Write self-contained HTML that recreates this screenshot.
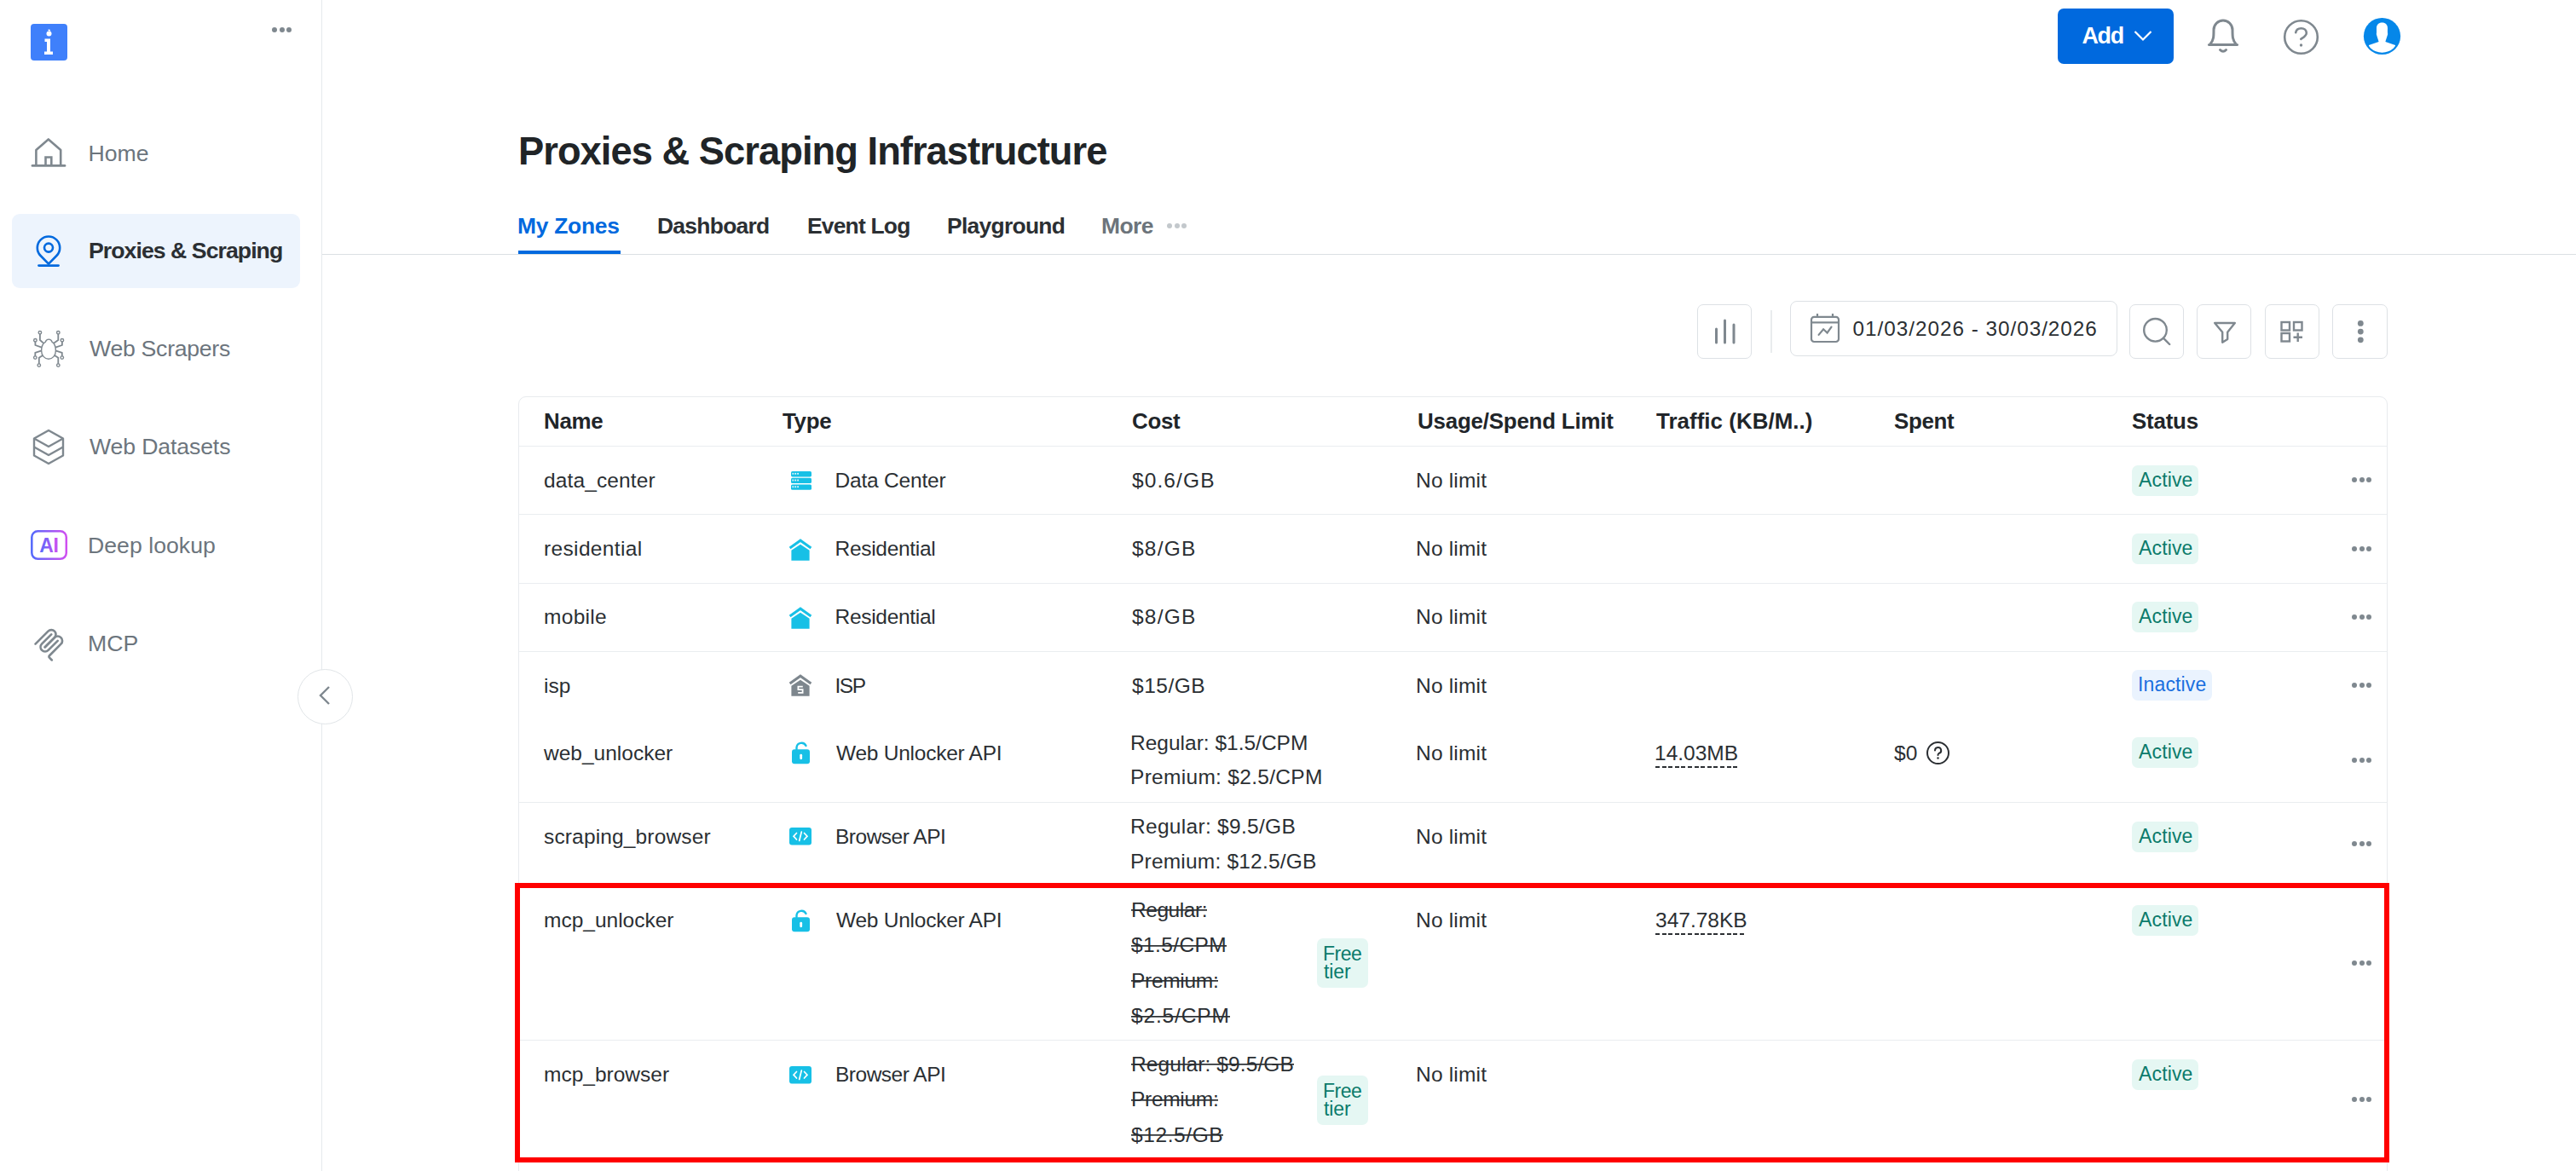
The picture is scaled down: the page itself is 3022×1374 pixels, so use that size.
<!DOCTYPE html>
<html><head><meta charset="utf-8"><style>
html,body{margin:0;padding:0;background:#fff;}
body{width:3022px;height:1374px;position:relative;overflow:hidden;font-family:"Liberation Sans",sans-serif;}
.t{position:absolute;line-height:1;white-space:nowrap;font-family:"Liberation Sans",sans-serif;}
svg{overflow:visible}
</style></head><body>
<div style="position:absolute;left:377px;top:0px;width:1px;height:1374px;background:#e6e9ec"></div>
<div style="position:absolute;left:36px;top:28px;width:43px;height:43px;background:#3f80fb;border-radius:4px"></div>
<svg style="position:absolute;left:36px;top:28px" width="43" height="43" viewBox="0 0 43 43" fill="none"><circle cx="21.5" cy="11.5" r="3" fill="#fff"/><path d="M20.5 7.5 q1.5 -1 2 1" stroke="#fff" stroke-width="1.5"/><path d="M16.5 17.5 h6.5 v15 h3 v3.5 h-10 v-3.5 h3 v-11.5 h-2.5z" fill="#fff"/></svg>
<div style="position:absolute;left:319px;top:32px;width:6px;height:6px;background:#7f888f;border-radius:50%"></div>
<div style="position:absolute;left:327.5px;top:32px;width:6px;height:6px;background:#7f888f;border-radius:50%"></div>
<div style="position:absolute;left:336px;top:32px;width:6px;height:6px;background:#7f888f;border-radius:50%"></div>
<div style="position:absolute;left:14px;top:251px;width:338px;height:87px;background:#edf4fd;border-radius:9px"></div>
<div class="t" style="left:103.5px;top:166.5px;font-size:26.7px;font-weight:400;color:#6c757d;letter-spacing:0px;">Home</div>
<div class="t" style="left:104.0px;top:281.2px;font-size:26.7px;font-weight:700;color:#2b2f33;letter-spacing:-0.97px;">Proxies &amp; Scraping</div>
<div class="t" style="left:105.0px;top:396.3px;font-size:26.7px;font-weight:400;color:#6c757d;letter-spacing:-0.3px;">Web Scrapers</div>
<div class="t" style="left:105.0px;top:511.0px;font-size:26.7px;font-weight:400;color:#6c757d;letter-spacing:-0.15px;">Web Datasets</div>
<div class="t" style="left:103.0px;top:626.5px;font-size:26.7px;font-weight:400;color:#6c757d;letter-spacing:0px;">Deep lookup</div>
<div class="t" style="left:103.0px;top:742.3px;font-size:26.7px;font-weight:400;color:#6c757d;letter-spacing:0px;">MCP</div>
<svg style="position:absolute;left:36px;top:160px" width="42" height="38" viewBox="0 0 42 38" fill="none"><path d="M6.4 34 V16 L20.8 3.4 L35.2 16 V34" stroke="#7f888f" stroke-width="2.6" stroke-linejoin="round"/><path d="M2 34.4 H40" stroke="#7f888f" stroke-width="2.8" stroke-linecap="round"/><path d="M17.5 34 V24.5 H24.3 V34" stroke="#7f888f" stroke-width="2.6"/></svg>
<svg style="position:absolute;left:38px;top:274px" width="38" height="42" viewBox="0 0 38 42" fill="none"><path d="M19 35.6 L9.6 26 A13.2 13.2 0 1 1 28.4 26 Z" stroke="#0069de" stroke-width="2.6" stroke-linejoin="round"/><circle cx="19" cy="16.6" r="5" stroke="#0069de" stroke-width="2.6"/><path d="M7.5 37.6 H30.5" stroke="#0069de" stroke-width="2.8" stroke-linecap="round"/></svg>
<svg style="position:absolute;left:34px;top:382px" width="46" height="54" viewBox="0 0 46 54" fill="none"><path d="M19.4 19.2 A3.9 4 0 0 1 27 19.2 C29.8 21 31.4 25 31.4 29.5 C31.4 35 27.8 39.2 23 39.2 C18.2 39.2 14.6 35 14.6 29.5 C14.6 25 16.2 21 19.4 19.2 Z" stroke="#7f888f" stroke-width="1.4"/><path d="M17 20.7 L12.9 17 L12.9 8.3" stroke="#7f888f" stroke-width="1.8" stroke-linejoin="round"/><circle cx="12.9" cy="8.3" r="1.75" fill="#fff" stroke="#7f888f" stroke-width="1.4"/><path d="M29 20.7 L34.3 17 L34.3 8.3" stroke="#7f888f" stroke-width="1.8" stroke-linejoin="round"/><circle cx="34.3" cy="8.3" r="1.75" fill="#fff" stroke="#7f888f" stroke-width="1.4"/><path d="M14.9 25.6 L7.4 23 L7.4 17.3" stroke="#7f888f" stroke-width="1.8" stroke-linejoin="round"/><circle cx="7.4" cy="17.3" r="1.75" fill="#fff" stroke="#7f888f" stroke-width="1.4"/><path d="M31.1 25.6 L38.9 23 L38.9 17.3" stroke="#7f888f" stroke-width="1.8" stroke-linejoin="round"/><circle cx="38.9" cy="17.3" r="1.75" fill="#fff" stroke="#7f888f" stroke-width="1.4"/><path d="M14.9 29.3 L7.3 31.8 L7.3 37.6" stroke="#7f888f" stroke-width="1.8" stroke-linejoin="round"/><circle cx="7.3" cy="37.6" r="1.75" fill="#fff" stroke="#7f888f" stroke-width="1.4"/><path d="M31.1 29.3 L38.8 31.8 L38.8 37.6" stroke="#7f888f" stroke-width="1.8" stroke-linejoin="round"/><circle cx="38.8" cy="37.6" r="1.75" fill="#fff" stroke="#7f888f" stroke-width="1.4"/><path d="M16.1 35 L11.8 37.8 L11.8 46.6" stroke="#7f888f" stroke-width="1.8" stroke-linejoin="round"/><circle cx="11.8" cy="46.6" r="1.75" fill="#fff" stroke="#7f888f" stroke-width="1.4"/><path d="M30 35 L34.3 37.8 L34.3 46.6" stroke="#7f888f" stroke-width="1.8" stroke-linejoin="round"/><circle cx="34.3" cy="46.6" r="1.75" fill="#fff" stroke="#7f888f" stroke-width="1.4"/></svg>
<svg style="position:absolute;left:38px;top:503px" width="38" height="43" viewBox="0 0 38 43" fill="none"><path d="M19 2 L36 11.5 V31.5 L19 41 L2 31.5 V11.5 Z" stroke="#7f888f" stroke-width="2.4" stroke-linejoin="round"/><path d="M2 11.5 L19 21 L36 11.5" stroke="#7f888f" stroke-width="2.4" stroke-linejoin="round"/><path d="M2 21.5 L19 31 L36 21.5" stroke="#7f888f" stroke-width="2.4" stroke-linejoin="round"/></svg>
<svg style="position:absolute;left:35px;top:621px" width="45" height="37" viewBox="0 0 45 37" fill="none"><defs><linearGradient id="aig" x1="0" y1="0" x2="1" y2="0"><stop offset="0" stop-color="#5469fb"/><stop offset="1" stop-color="#cf4ff0"/></linearGradient></defs><rect x="2.3" y="2.3" width="40.5" height="32.5" rx="7" stroke="url(#aig)" stroke-width="2.5"/><text x="22.3" y="26.8" text-anchor="middle" font-family="Liberation Sans" font-weight="700" font-size="23" letter-spacing="-0.5" fill="url(#aig)">AI</text></svg>
<svg style="position:absolute;left:35.8px;top:734px" width="43" height="43" viewBox="0 0 195 195" fill="none"><g stroke="#7f888f" stroke-width="12" stroke-linecap="round" fill="none"><path d="M25 97.8528L92.8823 29.9706C102.255 20.598 117.451 20.598 126.823 29.9706C136.196 39.3431 136.196 54.5391 126.823 63.9117L75.5581 115.177"/><path d="M76.2653 114.47L126.823 63.9117C136.196 54.5391 151.392 54.5391 160.765 63.9117L161.118 64.2652C170.491 73.6378 170.491 88.8338 161.118 98.2063L99.7248 159.6C96.6006 162.724 96.6006 167.789 99.7248 170.913L112.331 183.52"/><path d="M109.853 46.9411L59.6482 97.1457C50.2757 106.518 50.2757 121.714 59.6482 131.087C69.0208 140.459 84.2168 140.459 93.5894 131.087L143.794 80.8822"/></g></svg>
<div style="position:absolute;left:349px;top:784.5px;width:65px;height:65px;background:#fff;border:1.2px solid #e1e5e8;border-radius:50%;box-sizing:border-box"></div>
<svg style="position:absolute;left:370px;top:802px" width="22" height="28" viewBox="0 0 22 28" fill="none"><path d="M16 4 L6 14 L16 24" stroke="#7f888f" stroke-width="2.4" fill="none"/></svg>
<div style="position:absolute;left:2414px;top:10px;width:136px;height:65px;background:#0069de;border-radius:7px"></div>
<div class="t" style="left:2442.5px;top:28.8px;font-size:26.9px;font-weight:700;color:#fff;letter-spacing:-1.3px;">Add</div>
<svg style="position:absolute;left:2500px;top:32px" width="28" height="20" viewBox="0 0 28 20" fill="none"><path d="M4.5 5 L14 14.5 L23.5 5" stroke="#fff" stroke-width="2.2" fill="none"/></svg>
<svg style="position:absolute;left:2586px;top:18px" width="44" height="48" viewBox="0 0 44 48" fill="none"><path d="M7 33.5 C11 29 11 25 11 17 A11 11 0 0 1 33 17 C33 25 33 29 37 33.5" stroke="#7f888f" stroke-width="3" fill="none" stroke-linejoin="round"/><path d="M5.5 34.5 H38.5" stroke="#7f888f" stroke-width="3" stroke-linecap="round"/><path d="M18.5 40.5 Q22 44 25.5 40.5" stroke="#7f888f" stroke-width="3" stroke-linecap="round" fill="none"/></svg>
<svg style="position:absolute;left:2677px;top:21px" width="46" height="46" viewBox="0 0 46 46" fill="none"><circle cx="22.5" cy="22.5" r="19.3" stroke="#7f888f" stroke-width="2.6"/><path d="M16.2 17.3 C16.7 13.8 19.3 12.2 22.6 12.2 C26.3 12.2 28.8 14.6 28.8 17.8 C28.8 21.2 25.3 22.8 22.3 24.8" stroke="#7f888f" stroke-width="2.6" stroke-linecap="round" fill="none"/><circle cx="22.5" cy="32" r="1.7" fill="#7f888f"/></svg>
<svg style="position:absolute;left:2772px;top:20px" width="46" height="46" viewBox="0 0 46 46" fill="none"><circle cx="22.5" cy="22.5" r="21.6" fill="#0587e9"/><clipPath id="avc"><circle cx="22.5" cy="22.5" r="19.3"/></clipPath><g clip-path="url(#avc)" fill="#fff"><path d="M22.5 6.5 C18.5 6.5 16 9 16 13 C16 15.5 16.2 18 15.8 20 C16.5 22.5 17.6 25.5 18.6 29 L7 33 L7 48 L38 48 L38 33 L26.4 29 C27.4 25.5 28.5 22.5 29.2 20 C28.8 18 29 15.5 29 13 C29 9 26.5 6.5 22.5 6.5Z"/></g></svg>
<div class="t" style="left:608.0px;top:155.2px;font-size:45.3px;font-weight:700;color:#202427;letter-spacing:-0.97px;">Proxies &amp; Scraping Infrastructure</div>
<div class="t" style="left:607.0px;top:252.3px;font-size:26.4px;font-weight:700;color:#0069de;letter-spacing:-0.25px;">My Zones</div>
<div class="t" style="left:771.0px;top:252.3px;font-size:26.4px;font-weight:700;color:#2b2f33;letter-spacing:-0.7px;">Dashboard</div>
<div class="t" style="left:947.0px;top:252.3px;font-size:26.4px;font-weight:700;color:#2b2f33;letter-spacing:-0.78px;">Event Log</div>
<div class="t" style="left:1111.0px;top:252.3px;font-size:26.4px;font-weight:700;color:#2b2f33;letter-spacing:-0.7px;">Playground</div>
<div class="t" style="left:1292.0px;top:252.3px;font-size:26.4px;font-weight:700;color:#6c747b;letter-spacing:-0.5px;">More</div>
<div style="position:absolute;left:1369px;top:262px;width:6px;height:6px;background:#c3c8cc;border-radius:50%"></div>
<div style="position:absolute;left:1377.5px;top:262px;width:6px;height:6px;background:#c3c8cc;border-radius:50%"></div>
<div style="position:absolute;left:1386px;top:262px;width:6px;height:6px;background:#c3c8cc;border-radius:50%"></div>
<div style="position:absolute;left:378px;top:298px;width:2644px;height:1px;background:#dbe0e4"></div>
<div style="position:absolute;left:608px;top:294px;width:120px;height:4px;background:#0069de"></div>
<div style="position:absolute;left:1991px;top:357px;width:64px;height:64px;background:#fff;border:1.5px solid #dde1e5;border-radius:7px;box-sizing:border-box"></div>
<svg style="position:absolute;left:1991px;top:357px" width="64" height="64" viewBox="0 0 64 64" fill="none"><path d="M22.5 29 V45 M32.5 19 V45 M43 24 V45" stroke="#7f888f" stroke-width="3" stroke-linecap="round"/></svg>
<div style="position:absolute;left:2077px;top:364px;width:2px;height:50px;background:#e9ecee"></div>
<div style="position:absolute;left:2100px;top:353px;width:384px;height:65px;background:#fff;border:1.5px solid #dde1e5;border-radius:8px;box-sizing:border-box"></div>
<svg style="position:absolute;left:2122px;top:366px" width="38" height="38" viewBox="0 0 38 38" fill="none"><rect x="3" y="5.8" width="32" height="29.2" rx="3.2" stroke="#7f888f" stroke-width="2.2"/><path d="M3 12.4 H35" stroke="#7f888f" stroke-width="2.2"/><path d="M10 2.1 V6.5 M28 2.1 V6.5" stroke="#7f888f" stroke-width="2.2"/><path d="M11.6 26.9 L17.1 20.3 L21.6 24.5 L26.5 17.7" stroke="#7f888f" stroke-width="2.2" stroke-linecap="round" fill="none"/></svg>
<div class="t" style="left:2173.5px;top:373.5px;font-size:24.3px;font-weight:400;color:#2b2f33;letter-spacing:0.98px;">01/03/2026 - 30/03/2026</div>
<div style="position:absolute;left:2498px;top:357px;width:64px;height:64px;background:#fff;border:1.5px solid #dde1e5;border-radius:7px;box-sizing:border-box"></div>
<svg style="position:absolute;left:2498px;top:357px" width="64" height="64" viewBox="0 0 64 64" fill="none"><circle cx="30.5" cy="30.3" r="13.3" stroke="#7f888f" stroke-width="2.4"/><path d="M40.2 40 L47.2 47" stroke="#7f888f" stroke-width="2.4" stroke-linecap="round"/></svg>
<div style="position:absolute;left:2577px;top:357px;width:64px;height:64px;background:#fff;border:1.5px solid #dde1e5;border-radius:7px;box-sizing:border-box"></div>
<svg style="position:absolute;left:2577px;top:357px" width="64" height="64" viewBox="0 0 64 64" fill="none"><path d="M21.2 22 H44.8 L36.2 32.8 V40.9 L30.2 44.7 V32.8 Z" stroke="#7f888f" stroke-width="2.4" stroke-linejoin="round"/></svg>
<div style="position:absolute;left:2657px;top:357px;width:64px;height:64px;background:#fff;border:1.5px solid #dde1e5;border-radius:7px;box-sizing:border-box"></div>
<svg style="position:absolute;left:2657px;top:357px" width="64" height="64" viewBox="0 0 64 64" fill="none"><rect x="19.5" y="21" width="9.5" height="9.5" stroke="#7f888f" stroke-width="2.4"/><rect x="34" y="21" width="9.5" height="9.5" stroke="#7f888f" stroke-width="2.4"/><rect x="19.5" y="34" width="9.5" height="9.5" stroke="#7f888f" stroke-width="2.4"/><path d="M38.7 33.5 V44 M33.5 38.7 H44" stroke="#7f888f" stroke-width="2.4"/></svg>
<div style="position:absolute;left:2736px;top:357px;width:65px;height:64px;background:#fff;border:1.5px solid #dde1e5;border-radius:7px;box-sizing:border-box"></div>
<svg style="position:absolute;left:2736.5px;top:357px" width="64" height="64" viewBox="0 0 64 64" fill="none"><circle cx="32.3" cy="22.4" r="3.4" fill="#7f888f"/><circle cx="32.3" cy="32.1" r="3.4" fill="#7f888f"/><circle cx="32.3" cy="41.8" r="3.4" fill="#7f888f"/></svg>
<div style="position:absolute;left:608px;top:465px;width:2193px;height:1000px;border:1px solid #e8ebee;border-radius:9px;box-sizing:border-box"></div>
<div class="t" style="left:638.0px;top:481.7px;font-size:25.9px;font-weight:700;color:#212529;letter-spacing:-0.3px;">Name</div>
<div class="t" style="left:918.0px;top:481.7px;font-size:25.9px;font-weight:700;color:#212529;letter-spacing:-0.3px;">Type</div>
<div class="t" style="left:1328.0px;top:481.7px;font-size:25.9px;font-weight:700;color:#212529;letter-spacing:-0.3px;">Cost</div>
<div class="t" style="left:1663.0px;top:481.7px;font-size:25.9px;font-weight:700;color:#212529;letter-spacing:-0.2px;">Usage/Spend Limit</div>
<div class="t" style="left:1943.0px;top:481.7px;font-size:25.9px;font-weight:700;color:#212529;letter-spacing:0.05px;">Traffic (KB/M..)</div>
<div class="t" style="left:2222.0px;top:481.7px;font-size:25.9px;font-weight:700;color:#212529;letter-spacing:-0.3px;">Spent</div>
<div class="t" style="left:2501.0px;top:481.7px;font-size:25.9px;font-weight:700;color:#212529;letter-spacing:-0.2px;">Status</div>
<div style="position:absolute;left:609px;top:523px;width:2191px;height:1px;background:#eaedf0"></div>
<div style="position:absolute;left:609px;top:603px;width:2191px;height:1px;background:#eaedf0"></div>
<div style="position:absolute;left:609px;top:684px;width:2191px;height:1px;background:#eaedf0"></div>
<div style="position:absolute;left:609px;top:764px;width:2191px;height:1px;background:#eaedf0"></div>
<div style="position:absolute;left:609px;top:941px;width:2191px;height:1px;background:#eaedf0"></div>
<div style="position:absolute;left:609px;top:1038px;width:2191px;height:1px;background:#eaedf0"></div>
<div style="position:absolute;left:609px;top:1220px;width:2191px;height:1px;background:#eaedf0"></div>
<div class="t" style="left:638.0px;top:551.9px;font-size:24.5px;font-weight:400;color:#2b2f33;letter-spacing:0.12px;">data_center</div>
<svg style="position:absolute;left:928px;top:553px" width="24" height="22" viewBox="0 0 24 22" fill="none"><rect x="0" y="0.0" width="24" height="6.4" rx="1.6" fill="#17c0e6"/><rect x="1.4" y="1.9" width="1.8" height="1.8" fill="#fff" fill-opacity="0.85"/><rect x="4.3" y="1.9" width="1.8" height="1.8" fill="#fff" fill-opacity="0.85"/><rect x="7.2" y="1.9" width="1.8" height="1.8" fill="#fff" fill-opacity="0.85"/><rect x="0" y="7.7" width="24" height="6.4" rx="1.6" fill="#17c0e6"/><rect x="1.4" y="9.6" width="1.8" height="1.8" fill="#fff" fill-opacity="0.85"/><rect x="4.3" y="9.6" width="1.8" height="1.8" fill="#fff" fill-opacity="0.85"/><rect x="7.2" y="9.6" width="1.8" height="1.8" fill="#fff" fill-opacity="0.85"/><rect x="0" y="15.4" width="24" height="6.4" rx="1.6" fill="#17c0e6"/><rect x="1.4" y="17.3" width="1.8" height="1.8" fill="#fff" fill-opacity="0.85"/><rect x="4.3" y="17.3" width="1.8" height="1.8" fill="#fff" fill-opacity="0.85"/><rect x="7.2" y="17.3" width="1.8" height="1.8" fill="#fff" fill-opacity="0.85"/></svg>
<div class="t" style="left:979.5px;top:551.9px;font-size:24.5px;font-weight:400;color:#2b2f33;letter-spacing:-0.2px;">Data Center</div>
<div class="t" style="left:1328.0px;top:551.9px;font-size:24.5px;font-weight:400;color:#2b2f33;letter-spacing:1.1px;">$0.6/GB</div>
<div class="t" style="left:1661.0px;top:551.9px;font-size:24.5px;font-weight:400;color:#2b2f33;letter-spacing:0.2px;">No limit</div>
<div style="position:absolute;left:2501px;top:546px;width:78px;height:36px;background:#e5f7f3;border-radius:7px"></div>
<div class="t" style="left:2509.0px;top:552.1px;font-size:23.0px;font-weight:400;color:#0b7b6b;letter-spacing:0.15px;">Active</div>
<div style="position:absolute;left:2759px;top:560px;width:6px;height:6px;background:#7f888f;border-radius:50%"></div>
<div style="position:absolute;left:2767.5px;top:560px;width:6px;height:6px;background:#7f888f;border-radius:50%"></div>
<div style="position:absolute;left:2776px;top:560px;width:6px;height:6px;background:#7f888f;border-radius:50%"></div>
<div class="t" style="left:638.0px;top:631.9px;font-size:24.5px;font-weight:400;color:#2b2f33;letter-spacing:0.35px;">residential</div>
<svg style="position:absolute;left:926px;top:631.5px" width="26" height="26" viewBox="0 0 26 26" fill="none"><path d="M0.6 11 L13 2.2 L25.4 11" stroke="#17c0e6" stroke-width="3" fill="none" stroke-linejoin="miter"/><path d="M2.4 13.8 L13 6.8 L23.6 13.8 V25.8 H2.4 Z" fill="#17c0e6"/></svg>
<div class="t" style="left:979.5px;top:631.9px;font-size:24.5px;font-weight:400;color:#2b2f33;letter-spacing:-0.3px;">Residential</div>
<div class="t" style="left:1328.0px;top:631.9px;font-size:24.5px;font-weight:400;color:#2b2f33;letter-spacing:1.2px;">$8/GB</div>
<div class="t" style="left:1661.0px;top:631.9px;font-size:24.5px;font-weight:400;color:#2b2f33;letter-spacing:0.2px;">No limit</div>
<div style="position:absolute;left:2501px;top:626px;width:78px;height:36px;background:#e5f7f3;border-radius:7px"></div>
<div class="t" style="left:2509.0px;top:632.1px;font-size:23.0px;font-weight:400;color:#0b7b6b;letter-spacing:0.15px;">Active</div>
<div style="position:absolute;left:2759px;top:640.5px;width:6px;height:6px;background:#7f888f;border-radius:50%"></div>
<div style="position:absolute;left:2767.5px;top:640.5px;width:6px;height:6px;background:#7f888f;border-radius:50%"></div>
<div style="position:absolute;left:2776px;top:640.5px;width:6px;height:6px;background:#7f888f;border-radius:50%"></div>
<div class="t" style="left:638.0px;top:711.9px;font-size:24.5px;font-weight:400;color:#2b2f33;letter-spacing:0.3px;">mobile</div>
<svg style="position:absolute;left:926px;top:711.5px" width="26" height="26" viewBox="0 0 26 26" fill="none"><path d="M0.6 11 L13 2.2 L25.4 11" stroke="#17c0e6" stroke-width="3" fill="none" stroke-linejoin="miter"/><path d="M2.4 13.8 L13 6.8 L23.6 13.8 V25.8 H2.4 Z" fill="#17c0e6"/></svg>
<div class="t" style="left:979.5px;top:711.9px;font-size:24.5px;font-weight:400;color:#2b2f33;letter-spacing:-0.3px;">Residential</div>
<div class="t" style="left:1328.0px;top:711.9px;font-size:24.5px;font-weight:400;color:#2b2f33;letter-spacing:1.2px;">$8/GB</div>
<div class="t" style="left:1661.0px;top:711.9px;font-size:24.5px;font-weight:400;color:#2b2f33;letter-spacing:0.2px;">No limit</div>
<div style="position:absolute;left:2501px;top:706px;width:78px;height:36px;background:#e5f7f3;border-radius:7px"></div>
<div class="t" style="left:2509.0px;top:712.1px;font-size:23.0px;font-weight:400;color:#0b7b6b;letter-spacing:0.15px;">Active</div>
<div style="position:absolute;left:2759px;top:721px;width:6px;height:6px;background:#7f888f;border-radius:50%"></div>
<div style="position:absolute;left:2767.5px;top:721px;width:6px;height:6px;background:#7f888f;border-radius:50%"></div>
<div style="position:absolute;left:2776px;top:721px;width:6px;height:6px;background:#7f888f;border-radius:50%"></div>
<div class="t" style="left:638.0px;top:792.9px;font-size:24.5px;font-weight:400;color:#2b2f33;letter-spacing:0px;">isp</div>
<svg style="position:absolute;left:926px;top:791px" width="26" height="26" viewBox="0 0 26 26" fill="none"><path d="M0.6 11 L13 2.2 L25.4 11" stroke="#7d868d" stroke-width="3" fill="none" stroke-linejoin="miter"/><path d="M2.4 13.8 L13 6.8 L23.6 13.8 V25.8 H2.4 Z" fill="#7d868d"/><path d="M15.8 14.6 H10.4 V18.2 H15.6 V21.8 H10.2" stroke="#fff" stroke-width="1.8" fill="none"/></svg>
<div class="t" style="left:979.5px;top:792.9px;font-size:24.5px;font-weight:400;color:#2b2f33;letter-spacing:-1.5px;">ISP</div>
<div class="t" style="left:1328.0px;top:792.9px;font-size:24.5px;font-weight:400;color:#2b2f33;letter-spacing:0.5px;">$15/GB</div>
<div class="t" style="left:1661.0px;top:792.9px;font-size:24.5px;font-weight:400;color:#2b2f33;letter-spacing:0.2px;">No limit</div>
<div style="position:absolute;left:2501px;top:786px;width:94px;height:36px;background:#eaf3fe;border-radius:7px"></div>
<div class="t" style="left:2508.0px;top:792.1px;font-size:23.0px;font-weight:400;color:#1a6fdf;letter-spacing:0.15px;">Inactive</div>
<div style="position:absolute;left:2759px;top:801px;width:6px;height:6px;background:#7f888f;border-radius:50%"></div>
<div style="position:absolute;left:2767.5px;top:801px;width:6px;height:6px;background:#7f888f;border-radius:50%"></div>
<div style="position:absolute;left:2776px;top:801px;width:6px;height:6px;background:#7f888f;border-radius:50%"></div>
<div class="t" style="left:638.0px;top:871.9px;font-size:24.5px;font-weight:400;color:#2b2f33;letter-spacing:0px;">web_unlocker</div>
<svg style="position:absolute;left:926px;top:869px" width="27" height="27" viewBox="0 0 27 27" fill="none"><path d="M8.5 10 V8 A5.8 5.8 0 0 1 19.5 6" stroke="#17c0e6" stroke-width="2.4" fill="none" stroke-linecap="round"/><rect x="3" y="10.3" width="21" height="17" rx="3" fill="#17c0e6"/><rect x="12.3" y="15.8" width="2.8" height="6.4" rx="1.4" fill="#fff"/></svg>
<div class="t" style="left:981.0px;top:871.9px;font-size:24.5px;font-weight:400;color:#2b2f33;letter-spacing:-0.25px;">Web Unlocker API</div>
<div class="t" style="left:1326.0px;top:859.9px;font-size:24.5px;font-weight:400;color:#2b2f33;letter-spacing:0px;">Regular: $1.5/CPM</div>
<div class="t" style="left:1326.0px;top:900.4px;font-size:24.5px;font-weight:400;color:#2b2f33;letter-spacing:0.3px;">Premium: $2.5/CPM</div>
<div class="t" style="left:1661.0px;top:871.9px;font-size:24.5px;font-weight:400;color:#2b2f33;letter-spacing:0.2px;">No limit</div>
<div class="t" style="left:1941.0px;top:871.9px;font-size:24.5px;font-weight:400;color:#2b2f33;letter-spacing:0px;">14.03MB</div>
<div style="position:absolute;left:1942px;top:898.5px;width:98px;height:2.2px;background:repeating-linear-gradient(90deg,#2b2f33 0 5px,transparent 5px 7.6px)"></div>
<div class="t" style="left:2222.0px;top:871.9px;font-size:24.5px;font-weight:400;color:#2b2f33;letter-spacing:0px;">$0</div>
<svg style="position:absolute;left:2259px;top:869px" width="30" height="30" viewBox="0 0 30 30" fill="none"><circle cx="14.5" cy="14.5" r="12.5" stroke="#2b2f33" stroke-width="2"/><path d="M11 11.5 A3.6 3.6 0 1 1 15.5 15 C14.7 15.5 14.5 16 14.5 17" stroke="#2b2f33" stroke-width="2" fill="none" stroke-linecap="round"/><circle cx="14.5" cy="20.5" r="1.2" fill="#2b2f33"/></svg>
<div style="position:absolute;left:2501px;top:865px;width:78px;height:36px;background:#e5f7f3;border-radius:7px"></div>
<div class="t" style="left:2509.0px;top:871.1px;font-size:23.0px;font-weight:400;color:#0b7b6b;letter-spacing:0.15px;">Active</div>
<div style="position:absolute;left:2759px;top:889px;width:6px;height:6px;background:#7f888f;border-radius:50%"></div>
<div style="position:absolute;left:2767.5px;top:889px;width:6px;height:6px;background:#7f888f;border-radius:50%"></div>
<div style="position:absolute;left:2776px;top:889px;width:6px;height:6px;background:#7f888f;border-radius:50%"></div>
<div class="t" style="left:638.0px;top:969.9px;font-size:24.5px;font-weight:400;color:#2b2f33;letter-spacing:0.15px;">scraping_browser</div>
<svg style="position:absolute;left:925.7px;top:971px" width="26" height="21" viewBox="0 0 26 21" fill="none"><rect x="0" y="0" width="26" height="20.5" rx="3" fill="#17c0e6"/><path d="M8.5 6.5 L5 10.2 L8.5 14 M17.5 6.5 L21 10.2 L17.5 14 M14.3 5 L11.7 15.5" stroke="#fff" stroke-width="1.7" fill="none" stroke-linecap="round"/></svg>
<div class="t" style="left:980.0px;top:969.9px;font-size:24.5px;font-weight:400;color:#2b2f33;letter-spacing:-0.5px;">Browser API</div>
<div class="t" style="left:1326.0px;top:957.9px;font-size:24.5px;font-weight:400;color:#2b2f33;letter-spacing:0.3px;">Regular: $9.5/GB</div>
<div class="t" style="left:1326.0px;top:999.4px;font-size:24.5px;font-weight:400;color:#2b2f33;letter-spacing:0.2px;">Premium: $12.5/GB</div>
<div class="t" style="left:1661.0px;top:969.9px;font-size:24.5px;font-weight:400;color:#2b2f33;letter-spacing:0.2px;">No limit</div>
<div style="position:absolute;left:2501px;top:964px;width:78px;height:36px;background:#e5f7f3;border-radius:7px"></div>
<div class="t" style="left:2509.0px;top:970.1px;font-size:23.0px;font-weight:400;color:#0b7b6b;letter-spacing:0.15px;">Active</div>
<div style="position:absolute;left:2759px;top:987px;width:6px;height:6px;background:#7f888f;border-radius:50%"></div>
<div style="position:absolute;left:2767.5px;top:987px;width:6px;height:6px;background:#7f888f;border-radius:50%"></div>
<div style="position:absolute;left:2776px;top:987px;width:6px;height:6px;background:#7f888f;border-radius:50%"></div>
<div class="t" style="left:638.0px;top:1068.4px;font-size:24.5px;font-weight:400;color:#2b2f33;letter-spacing:0px;">mcp_unlocker</div>
<svg style="position:absolute;left:926px;top:1066px" width="27" height="27" viewBox="0 0 27 27" fill="none"><path d="M8.5 10 V8 A5.8 5.8 0 0 1 19.5 6" stroke="#17c0e6" stroke-width="2.4" fill="none" stroke-linecap="round"/><rect x="3" y="10.3" width="21" height="17" rx="3" fill="#17c0e6"/><rect x="12.3" y="15.8" width="2.8" height="6.4" rx="1.4" fill="#fff"/></svg>
<div class="t" style="left:981.0px;top:1068.4px;font-size:24.5px;font-weight:400;color:#2b2f33;letter-spacing:-0.25px;">Web Unlocker API</div>
<div class="t" style="left:1327.0px;top:1055.6px;font-size:24.5px;font-weight:400;color:#2b2f33;letter-spacing:-0.45px;background:linear-gradient(#2a2e32,#2a2e32) 0 11.6px / 100% 1.7px no-repeat">Regular:</div>
<div class="t" style="left:1327.0px;top:1097.1px;font-size:24.5px;font-weight:400;color:#2b2f33;letter-spacing:0.4px;background:linear-gradient(#2a2e32,#2a2e32) 0 11.6px / 100% 1.7px no-repeat">$1.5/CPM</div>
<div class="t" style="left:1327.0px;top:1138.6px;font-size:24.5px;font-weight:400;color:#2b2f33;letter-spacing:-0.3px;background:linear-gradient(#2a2e32,#2a2e32) 0 11.6px / 100% 1.7px no-repeat">Premium:</div>
<div class="t" style="left:1327.0px;top:1180.1px;font-size:24.5px;font-weight:400;color:#2b2f33;letter-spacing:0.85px;background:linear-gradient(#2a2e32,#2a2e32) 0 11.6px / 100% 1.7px no-repeat">$2.5/CPM</div>
<div style="position:absolute;left:1545px;top:1101px;width:60px;height:58px;background:#e5f7f3;border-radius:7px"></div>
<div class="t" style="left:1552.0px;top:1108.4px;font-size:23.0px;font-weight:400;color:#0b7b6b;letter-spacing:-0.5px;">Free</div>
<div class="t" style="left:1553.0px;top:1129.1px;font-size:23.0px;font-weight:400;color:#0b7b6b;letter-spacing:-0.1px;">tier</div>
<div class="t" style="left:1661.0px;top:1068.2px;font-size:24.5px;font-weight:400;color:#2b2f33;letter-spacing:0.2px;">No limit</div>
<div class="t" style="left:1942.0px;top:1068.2px;font-size:24.5px;font-weight:400;color:#2b2f33;letter-spacing:0px;">347.78KB</div>
<div style="position:absolute;left:1942px;top:1095px;width:106px;height:2.2px;background:repeating-linear-gradient(90deg,#2b2f33 0 5px,transparent 5px 7.6px)"></div>
<div style="position:absolute;left:2501px;top:1062px;width:78px;height:36px;background:#e5f7f3;border-radius:7px"></div>
<div class="t" style="left:2509.0px;top:1068.1px;font-size:23.0px;font-weight:400;color:#0b7b6b;letter-spacing:0.15px;">Active</div>
<div style="position:absolute;left:2759px;top:1127px;width:6px;height:6px;background:#7f888f;border-radius:50%"></div>
<div style="position:absolute;left:2767.5px;top:1127px;width:6px;height:6px;background:#7f888f;border-radius:50%"></div>
<div style="position:absolute;left:2776px;top:1127px;width:6px;height:6px;background:#7f888f;border-radius:50%"></div>
<div class="t" style="left:638.0px;top:1248.6px;font-size:24.5px;font-weight:400;color:#2b2f33;letter-spacing:0px;">mcp_browser</div>
<svg style="position:absolute;left:925.7px;top:1250.5px" width="26" height="21" viewBox="0 0 26 21" fill="none"><rect x="0" y="0" width="26" height="20.5" rx="3" fill="#17c0e6"/><path d="M8.5 6.5 L5 10.2 L8.5 14 M17.5 6.5 L21 10.2 L17.5 14 M14.3 5 L11.7 15.5" stroke="#fff" stroke-width="1.7" fill="none" stroke-linecap="round"/></svg>
<div class="t" style="left:980.0px;top:1248.6px;font-size:24.5px;font-weight:400;color:#2b2f33;letter-spacing:-0.5px;">Browser API</div>
<div class="t" style="left:1327.0px;top:1236.7px;font-size:24.5px;font-weight:400;color:#2b2f33;letter-spacing:0.1px;background:linear-gradient(#2a2e32,#2a2e32) 0 11.6px / 100% 1.7px no-repeat">Regular: $9.5/GB</div>
<div class="t" style="left:1327.0px;top:1278.1px;font-size:24.5px;font-weight:400;color:#2b2f33;letter-spacing:-0.3px;background:linear-gradient(#2a2e32,#2a2e32) 0 11.6px / 100% 1.7px no-repeat">Premium:</div>
<div class="t" style="left:1327.0px;top:1319.5px;font-size:24.5px;font-weight:400;color:#2b2f33;letter-spacing:0.6px;background:linear-gradient(#2a2e32,#2a2e32) 0 11.6px / 100% 1.7px no-repeat">$12.5/GB</div>
<div style="position:absolute;left:1545px;top:1262px;width:60px;height:58px;background:#e5f7f3;border-radius:7px"></div>
<div class="t" style="left:1552.0px;top:1269.4px;font-size:23.0px;font-weight:400;color:#0b7b6b;letter-spacing:-0.5px;">Free</div>
<div class="t" style="left:1553.0px;top:1290.1px;font-size:23.0px;font-weight:400;color:#0b7b6b;letter-spacing:-0.1px;">tier</div>
<div class="t" style="left:1661.0px;top:1248.7px;font-size:24.5px;font-weight:400;color:#2b2f33;letter-spacing:0.2px;">No limit</div>
<div style="position:absolute;left:2501px;top:1243px;width:78px;height:36px;background:#e5f7f3;border-radius:7px"></div>
<div class="t" style="left:2509.0px;top:1249.1px;font-size:23.0px;font-weight:400;color:#0b7b6b;letter-spacing:0.15px;">Active</div>
<div style="position:absolute;left:2759px;top:1287px;width:6px;height:6px;background:#7f888f;border-radius:50%"></div>
<div style="position:absolute;left:2767.5px;top:1287px;width:6px;height:6px;background:#7f888f;border-radius:50%"></div>
<div style="position:absolute;left:2776px;top:1287px;width:6px;height:6px;background:#7f888f;border-radius:50%"></div>
<div style="position:absolute;left:604px;top:1036px;width:2199px;height:328px;border:6px solid #ff0000;box-sizing:border-box"></div>
</body></html>
